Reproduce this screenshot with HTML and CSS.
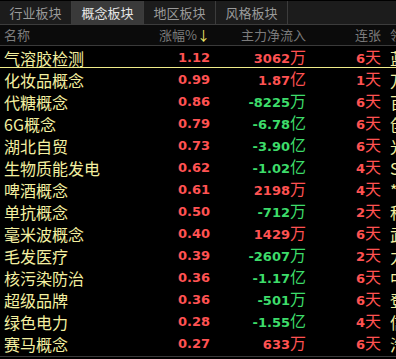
FILE: index.html
```html
<!DOCTYPE html>
<html>
<head>
  <title>概念板块</title>
  <link rel="stylesheet" href="styles.css">
</head>
<body>
  <div class="tabs">
    <div class="tab">行业板块</div>
    <div class="tab active">概念板块</div>
    <div class="tab">地区板块</div>
    <div class="tab">风格板块</div>
    <div class="tab-rest"></div>
  </div>

  <div class="row head">
    <span class="name">名称</span>
    <span class="num">涨幅%<b class="arrow">↓</b></span>
    <span class="num">主力净流入</span>
    <span class="num">连张</span>
    <span class="lead">领</span>
  </div>

  <div class="list">
    <div class="row selected">
      <span class="name">气溶胶检测</span><span class="num up">1.12</span>
      <span class="num up">3062<i>万</i></span><span class="num up">6<i>天</i></span><span class="lead">蓝</span>
    </div>
    <div class="row">
      <span class="name">化妆品概念</span><span class="num up">0.99</span>
      <span class="num up">1.87<i>亿</i></span><span class="num up">1<i>天</i></span><span class="lead">万</span>
    </div>
    <div class="row">
      <span class="name">代糖概念</span><span class="num up">0.86</span>
      <span class="num down">-8225<i>万</i></span><span class="num up">6<i>天</i></span><span class="lead">百</span>
    </div>
    <div class="row">
      <span class="name">6G概念</span><span class="num up">0.79</span>
      <span class="num down">-6.78<i>亿</i></span><span class="num up">6<i>天</i></span><span class="lead">创</span>
    </div>
    <div class="row">
      <span class="name">湖北自贸</span><span class="num up">0.73</span>
      <span class="num down">-3.90<i>亿</i></span><span class="num up">6<i>天</i></span><span class="lead">光</span>
    </div>
    <div class="row">
      <span class="name">生物质能发电</span><span class="num up">0.62</span>
      <span class="num down">-1.02<i>亿</i></span><span class="num up">4<i>天</i></span><span class="lead">S</span>
    </div>
    <div class="row">
      <span class="name">啤酒概念</span><span class="num up">0.61</span>
      <span class="num up">2198<i>万</i></span><span class="num up">4<i>天</i></span><span class="lead">*</span>
    </div>
    <div class="row">
      <span class="name">单抗概念</span><span class="num up">0.50</span>
      <span class="num down">-712<i>万</i></span><span class="num up">2<i>天</i></span><span class="lead">科</span>
    </div>
    <div class="row">
      <span class="name">毫米波概念</span><span class="num up">0.40</span>
      <span class="num up">1429<i>万</i></span><span class="num up">6<i>天</i></span><span class="lead">武</span>
    </div>
    <div class="row">
      <span class="name">毛发医疗</span><span class="num up">0.39</span>
      <span class="num down">-2607<i>万</i></span><span class="num up">2<i>天</i></span><span class="lead">力</span>
    </div>
    <div class="row">
      <span class="name">核污染防治</span><span class="num up">0.36</span>
      <span class="num down">-1.17<i>亿</i></span><span class="num up">6<i>天</i></span><span class="lead">中</span>
    </div>
    <div class="row">
      <span class="name">超级品牌</span><span class="num up">0.36</span>
      <span class="num down">-501<i>万</i></span><span class="num up">6<i>天</i></span><span class="lead">登</span>
    </div>
    <div class="row">
      <span class="name">绿色电力</span><span class="num up">0.28</span>
      <span class="num down">-1.55<i>亿</i></span><span class="num up">4<i>天</i></span><span class="lead">信</span>
    </div>
    <div class="row">
      <span class="name">赛马概念</span><span class="num up">0.27</span>
      <span class="num up">633<i>万</i></span><span class="num up">6<i>天</i></span><span class="lead">汽</span>
    </div>
  </div>
</body>
</html>
```

FILE: styles.css
```css
* {
  margin: 0;
  padding: 0;
  box-sizing: border-box;
}

body {
  width: 396px;
  height: 359px;
  overflow: hidden;
  background-color: #000;
  font-family: "Noto Sans CJK SC", "DejaVu Sans", sans-serif;
}

.tabs {
  display: flex;
  height: 25px;
  background-color: #1c1c1c;
  border-top: 1px solid #000;
  border-bottom: 1px solid #3c3c3c;
}

.tab {
  width: 72px;
  border-right: 1px solid #3c3c3c;
  color: #9a9a9a;
  font-size: 13px;
  line-height: 23px;
  text-align: center;
}

.tab.active {
  background-color: #3a3a3a;
  color: #e6e6e6;
}

.tab-rest {
  flex: 1;
}

.row {
  display: grid;
  grid-template-columns: 146px 60px 96px 75px 1fr;
  align-items: center;
  height: 22px;
  line-height: 20px;
  padding-left: 4px;
  white-space: nowrap;
  overflow: hidden;
}

.row.head {
  height: 21px;
  background-color: #0b0b0b;
  border-bottom: 1px solid #3a3a3a;
  color: #7c7c7c;
  font-size: 13px;
}

.arrow {
  color: #f2e86a;
  font-weight: normal;
}

.list {
  height: 311px;
  border-bottom: 1px solid #3a3a3a;
}

.row.selected {
  border-bottom: 1px solid #f0ec8a;
}

.name {
  color: #f4f0a0;
  font-size: 16px;
}

.num {
  text-align: right;
  font-family: "DejaVu Sans", sans-serif;
  font-weight: bold;
  font-size: 13px;
}

.num i {
  font-style: normal;
  font-weight: normal;
  font-family: "Noto Sans CJK SC", sans-serif;
  font-size: 16px;
}

.lead {
  padding-left: 9px;
  color: #f4f0a0;
  font-size: 16px;
}

.head .name,
.head .num,
.head .lead {
  color: #7c7c7c;
  font-family: "Noto Sans CJK SC", sans-serif;
  font-weight: normal;
  font-size: 13px;
}

.up {
  color: #ff5252;
}

.down {
  color: #3ddc6a;
}
```
